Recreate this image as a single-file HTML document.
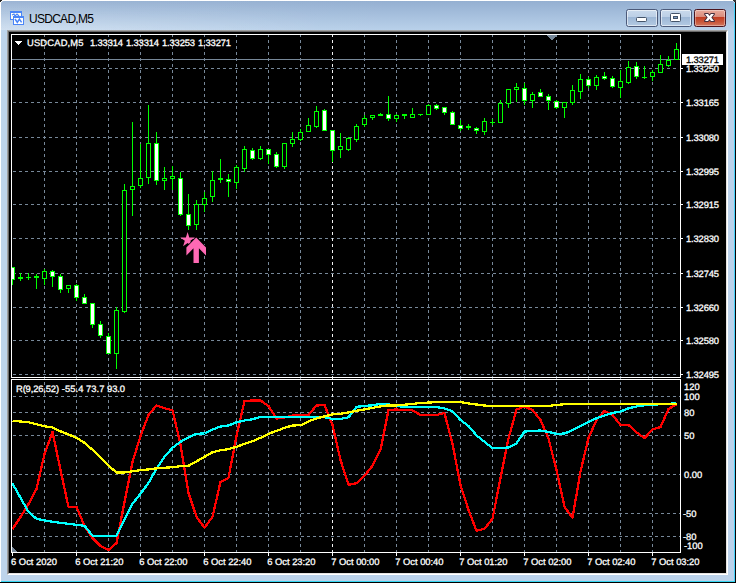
<!DOCTYPE html>
<html><head><meta charset="utf-8"><title>USDCAD,M5</title>
<style>
html,body{margin:0;padding:0;background:#fff;}
body{width:737px;height:583px;position:relative;overflow:hidden;font-family:"Liberation Sans",Arial,sans-serif;}
.win{position:absolute;left:1px;top:1px;width:734px;height:581px;box-sizing:border-box;
  background:linear-gradient(90deg,rgba(255,255,255,.07) 0,rgba(255,255,255,.04) 30%,rgba(255,255,255,0) 55%,rgba(255,255,255,0) 85%,rgba(255,255,255,.03) 100%),linear-gradient(180deg,#94afd1 0,#b9d1ea 29px,#b9d1ea 100%);
  border-radius:3px 3px 0 0;}
.glow{position:absolute;left:1px;top:1px;width:330px;height:29px;background:linear-gradient(180deg,rgba(255,255,255,0) 0,rgba(255,255,255,.1) 40%,rgba(255,255,255,.3) 100%);-webkit-mask-image:linear-gradient(90deg,#000 0,rgba(0,0,0,.6) 40%,transparent 100%);mask-image:linear-gradient(90deg,#000 0,rgba(0,0,0,.6) 40%,transparent 100%);}
.edge-r{position:absolute;left:734px;top:3px;width:1px;height:579px;background:#46d2fa;}
.edge-r2{position:absolute;left:735px;top:2px;width:1px;height:581px;background:#0a0505;}
.edge-b{position:absolute;left:1px;top:581px;width:734px;height:1px;background:#35d6f2;}
.edge-b2{position:absolute;left:0;top:582px;width:736px;height:1px;background:#000;}
.corner{position:absolute;left:0;top:0;width:2px;height:1px;background:#222;}
.corner1{position:absolute;left:0;top:1px;width:1px;height:1px;background:#222;}
.corner2{position:absolute;left:733px;top:0;width:3px;height:1px;background:#333;}
.corner3{position:absolute;left:734px;top:1px;width:2px;height:1px;background:#333;}
.title{position:absolute;left:29px;top:12px;font-size:12px;line-height:14px;color:#000;letter-spacing:-0.72px;white-space:nowrap;}
.sunk{position:absolute;left:7px;top:30px;width:721px;height:545px;box-sizing:border-box;
  border-style:solid;border-width:1px;border-color:#a0a0a0 #fff #fff #a0a0a0;}
.sunk2{position:absolute;left:8px;top:31px;width:719px;height:543px;box-sizing:border-box;background:#000;
  border-style:solid;border-width:1px;border-color:#696969 #e3e3e3 #e3e3e3 #696969;}
.btn{position:absolute;top:9px;width:32px;height:18px;box-sizing:border-box;border:1px solid #4c5a7a;border-radius:2.5px;
  background:linear-gradient(180deg,#c9d9ec 0,#bccfe6 42%,#9db7d6 46%,#b4cae3 100%);box-shadow:inset 0 0 0 1px rgba(255,255,255,.55);}
.btn.close{border-color:#4b141e;background:linear-gradient(180deg,#e9aa9b 0,#d98c7d 42%,#c23c22 46%,#c9573a 75%,#d47860 100%);box-shadow:inset 0 0 0 1px rgba(255,255,255,.35);}
.chart{position:absolute;left:0;top:0;}
.ico{position:absolute;left:0;top:0;}
</style></head><body>
<div class="win"></div><div class="glow"></div>
<div class="corner"></div><div class="corner1"></div><div class="corner2"></div><div class="corner3"></div>
<div class="edge-r"></div><div class="edge-r2"></div><div class="edge-b"></div><div class="edge-b2"></div>
<div class="title">USDCAD,M5</div>
<div class="btn" style="left:626px"></div>
<div class="btn" style="left:660px"></div>
<div class="btn close" style="left:694px"></div>
<svg class="ico" width="737" height="34" viewBox="0 0 737 34">
<!-- app icon -->
<g shape-rendering="crispEdges">
<rect x="10" y="11" width="12" height="9" fill="#4a86f7"/><rect x="11" y="13" width="10" height="6" fill="#fffef4"/>
<rect x="13" y="16" width="11" height="9" fill="#4a86f7"/><rect x="14" y="18" width="9" height="6" fill="#fff"/>
</g>
<polyline points="12,15 14,14 15,16 17,14 19,16" fill="none" stroke="#4a86f7" stroke-width="1.2"/>
<polyline points="15,19 17.3,22.3 19.4,19 21.6,22.3" fill="none" stroke="#4a86f7" stroke-width="1.5"/>
<!-- minimize glyph -->
<rect x="636.5" y="17.5" width="10" height="4" rx="1" fill="#fff" stroke="#44546a" stroke-width="1"/>
<!-- maximize glyph -->
<rect x="670.5" y="13.5" width="10" height="8" rx="1" fill="#fff" stroke="#44546a" stroke-width="1"/>
<rect x="673.5" y="16.5" width="4" height="2" fill="#7f9fc6" stroke="#44546a" stroke-width="1"/>
<!-- close glyph -->
<g stroke-linecap="butt">
<polygon points="705,14 708,14 709.5,15.9 711,14 714,14 711.3,17.5 714,21 711,21 709.5,19.1 708,21 705,21 707.7,17.5" fill="#fff" stroke="#47303f" stroke-width="2" stroke-linejoin="round" paint-order="stroke"/>
</g>
</svg>
<div class="sunk"></div><div class="sunk2"></div>
<svg class="chart" width="737" height="583" viewBox="0 0 737 583" shape-rendering="crispEdges">
<g stroke="#778899" stroke-width="1" stroke-dasharray="3 3" fill="none"><line x1="13" y1="68.5" x2="676" y2="68.5"/><line x1="13" y1="102.5" x2="676" y2="102.5"/><line x1="13" y1="137.5" x2="676" y2="137.5"/><line x1="13" y1="171.5" x2="676" y2="171.5"/><line x1="13" y1="204.5" x2="676" y2="204.5"/><line x1="13" y1="238.5" x2="676" y2="238.5"/><line x1="13" y1="273.5" x2="676" y2="273.5"/><line x1="13" y1="307.5" x2="676" y2="307.5"/><line x1="13" y1="340.5" x2="676" y2="340.5"/><line x1="13" y1="374.5" x2="676" y2="374.5"/><line x1="13" y1="396.5" x2="680" y2="396.5"/><line x1="13" y1="412.5" x2="680" y2="412.5"/><line x1="13" y1="435.5" x2="680" y2="435.5"/><line x1="13" y1="474.5" x2="680" y2="474.5"/><line x1="13" y1="513.5" x2="680" y2="513.5"/><line x1="13" y1="536.5" x2="680" y2="536.5"/><line x1="44.5" y1="34" x2="44.5" y2="552"/><line x1="76.5" y1="34" x2="76.5" y2="552"/><line x1="108.5" y1="34" x2="108.5" y2="552"/><line x1="140.5" y1="34" x2="140.5" y2="552"/><line x1="172.5" y1="34" x2="172.5" y2="552"/><line x1="204.5" y1="34" x2="204.5" y2="552"/><line x1="236.5" y1="34" x2="236.5" y2="552"/><line x1="268.5" y1="34" x2="268.5" y2="552"/><line x1="300.5" y1="34" x2="300.5" y2="552"/><line x1="364.5" y1="34" x2="364.5" y2="552"/><line x1="396.5" y1="34" x2="396.5" y2="552"/><line x1="428.5" y1="34" x2="428.5" y2="552"/><line x1="460.5" y1="34" x2="460.5" y2="552"/><line x1="492.5" y1="34" x2="492.5" y2="552"/><line x1="524.5" y1="34" x2="524.5" y2="552"/><line x1="556.5" y1="34" x2="556.5" y2="552"/><line x1="588.5" y1="34" x2="588.5" y2="552"/><line x1="620.5" y1="34" x2="620.5" y2="552"/><line x1="652.5" y1="34" x2="652.5" y2="552"/></g><g stroke="#f0f0f0" stroke-width="1" stroke-dasharray="3 3" fill="none"><line x1="332.5" y1="34" x2="332.5" y2="552"/></g>
<!-- bid line -->
<rect x="12" y="59" width="668" height="1" fill="#778899"/>
<!-- shift markers -->
<polygon points="546,35 557,35 551.5,40.5" fill="#778899"/>
<rect x="15" y="41" width="7" height="1" fill="#fff"/><rect x="16" y="42" width="5" height="1" fill="#fff"/><rect x="17" y="43" width="3" height="1" fill="#fff"/><rect x="18" y="44" width="1" height="1" fill="#fff"/>
<polygon points="12,547 12,552 17,552" fill="#778899"/>
<!-- frames -->
<g fill="#fff">
<rect x="11" y="34" width="670" height="1"/>
<rect x="11" y="377" width="670" height="1"/>
<rect x="11" y="379" width="670" height="1"/>
<rect x="11" y="552" width="670" height="1"/>
<rect x="11" y="34" width="1" height="344"/>
<rect x="11" y="379" width="1" height="174"/>
<rect x="680" y="34" width="1" height="344"/>
<rect x="680" y="379" width="1" height="174"/>
</g>
<rect x="12" y="553" width="1" height="3" fill="#fff"/><rect x="76" y="553" width="1" height="3" fill="#fff"/><rect x="140" y="553" width="1" height="3" fill="#fff"/><rect x="204" y="553" width="1" height="3" fill="#fff"/><rect x="268" y="553" width="1" height="3" fill="#fff"/><rect x="332" y="553" width="1" height="3" fill="#fff"/><rect x="396" y="553" width="1" height="3" fill="#fff"/><rect x="460" y="553" width="1" height="3" fill="#fff"/><rect x="524" y="553" width="1" height="3" fill="#fff"/><rect x="588" y="553" width="1" height="3" fill="#fff"/><rect x="652" y="553" width="1" height="3" fill="#fff"/><rect x="681" y="68" width="2" height="1" fill="#fff"/><rect x="681" y="102" width="2" height="1" fill="#fff"/><rect x="681" y="137" width="2" height="1" fill="#fff"/><rect x="681" y="171" width="2" height="1" fill="#fff"/><rect x="681" y="204" width="2" height="1" fill="#fff"/><rect x="681" y="238" width="2" height="1" fill="#fff"/><rect x="681" y="273" width="2" height="1" fill="#fff"/><rect x="681" y="307" width="2" height="1" fill="#fff"/><rect x="681" y="340" width="2" height="1" fill="#fff"/><rect x="681" y="374" width="2" height="1" fill="#fff"/>
<!-- candles -->
<clipPath id="cl"><rect x="12" y="35" width="668" height="342"/></clipPath>
<g clip-path="url(#cl)">
<rect x="12" y="267" width="1" height="18" fill="#00ff00"/>
<rect x="10" y="267" width="5" height="13" fill="#00ff00"/>
<rect x="11" y="268" width="3" height="11" fill="#fff"/>
<rect x="20" y="273" width="1" height="8" fill="#00ff00"/>
<rect x="18" y="277" width="5" height="2" fill="#00ff00"/>
<rect x="28" y="273" width="1" height="7" fill="#00ff00"/>
<rect x="26" y="277" width="5" height="1" fill="#00ff00"/>
<rect x="36" y="274" width="1" height="15" fill="#00ff00"/>
<rect x="34" y="276" width="5" height="2" fill="#00ff00"/>
<rect x="44" y="269" width="1" height="16" fill="#00ff00"/>
<rect x="42" y="271" width="5" height="8" fill="#00ff00"/>
<rect x="43" y="272" width="3" height="6" fill="#000"/>
<rect x="52" y="270" width="1" height="17" fill="#00ff00"/>
<rect x="50" y="271" width="5" height="6" fill="#00ff00"/>
<rect x="51" y="272" width="3" height="4" fill="#fff"/>
<rect x="60" y="274" width="1" height="19" fill="#00ff00"/>
<rect x="58" y="276" width="5" height="14" fill="#00ff00"/>
<rect x="59" y="277" width="3" height="12" fill="#fff"/>
<rect x="68" y="285" width="1" height="8" fill="#00ff00"/>
<rect x="66" y="285" width="5" height="4" fill="#00ff00"/>
<rect x="67" y="286" width="3" height="2" fill="#000"/>
<rect x="76" y="284" width="1" height="17" fill="#00ff00"/>
<rect x="74" y="285" width="5" height="13" fill="#00ff00"/>
<rect x="75" y="286" width="3" height="11" fill="#fff"/>
<rect x="84" y="294" width="1" height="10" fill="#00ff00"/>
<rect x="82" y="297" width="5" height="7" fill="#00ff00"/>
<rect x="83" y="298" width="3" height="5" fill="#fff"/>
<rect x="92" y="303" width="1" height="25" fill="#00ff00"/>
<rect x="90" y="303" width="5" height="22" fill="#00ff00"/>
<rect x="91" y="304" width="3" height="20" fill="#fff"/>
<rect x="100" y="321" width="1" height="17" fill="#00ff00"/>
<rect x="98" y="324" width="5" height="12" fill="#00ff00"/>
<rect x="99" y="325" width="3" height="10" fill="#fff"/>
<rect x="108" y="333" width="1" height="21" fill="#00ff00"/>
<rect x="106" y="336" width="5" height="18" fill="#00ff00"/>
<rect x="107" y="337" width="3" height="16" fill="#fff"/>
<rect x="116" y="307" width="1" height="62" fill="#00ff00"/>
<rect x="114" y="310" width="5" height="44" fill="#00ff00"/>
<rect x="115" y="311" width="3" height="42" fill="#000"/>
<rect x="124" y="184" width="1" height="129" fill="#00ff00"/>
<rect x="122" y="190" width="5" height="122" fill="#00ff00"/>
<rect x="123" y="191" width="3" height="120" fill="#000"/>
<rect x="132" y="122" width="1" height="94" fill="#00ff00"/>
<rect x="130" y="186" width="5" height="4" fill="#00ff00"/>
<rect x="131" y="187" width="3" height="2" fill="#000"/>
<rect x="140" y="144" width="1" height="44" fill="#00ff00"/>
<rect x="138" y="178" width="5" height="8" fill="#00ff00"/>
<rect x="139" y="179" width="3" height="6" fill="#000"/>
<rect x="148" y="105" width="1" height="79" fill="#00ff00"/>
<rect x="146" y="143" width="5" height="35" fill="#00ff00"/>
<rect x="147" y="144" width="3" height="33" fill="#000"/>
<rect x="156" y="132" width="1" height="53" fill="#00ff00"/>
<rect x="154" y="143" width="5" height="38" fill="#00ff00"/>
<rect x="155" y="144" width="3" height="36" fill="#fff"/>
<rect x="164" y="167" width="1" height="23" fill="#00ff00"/>
<rect x="162" y="178" width="5" height="3" fill="#00ff00"/>
<rect x="163" y="179" width="3" height="1" fill="#000"/>
<rect x="172" y="166" width="1" height="24" fill="#00ff00"/>
<rect x="170" y="176" width="5" height="3" fill="#00ff00"/>
<rect x="171" y="177" width="3" height="1" fill="#000"/>
<rect x="180" y="172" width="1" height="44" fill="#00ff00"/>
<rect x="178" y="178" width="5" height="37" fill="#00ff00"/>
<rect x="179" y="179" width="3" height="35" fill="#fff"/>
<rect x="188" y="194" width="1" height="36" fill="#00ff00"/>
<rect x="186" y="214" width="5" height="12" fill="#00ff00"/>
<rect x="187" y="215" width="3" height="10" fill="#fff"/>
<rect x="196" y="200" width="1" height="30" fill="#00ff00"/>
<rect x="194" y="204" width="5" height="21" fill="#00ff00"/>
<rect x="195" y="205" width="3" height="19" fill="#000"/>
<rect x="204" y="192" width="1" height="20" fill="#00ff00"/>
<rect x="202" y="198" width="5" height="7" fill="#00ff00"/>
<rect x="203" y="199" width="3" height="5" fill="#000"/>
<rect x="212" y="171" width="1" height="31" fill="#00ff00"/>
<rect x="210" y="180" width="5" height="17" fill="#00ff00"/>
<rect x="211" y="181" width="3" height="15" fill="#000"/>
<rect x="220" y="159" width="1" height="24" fill="#00ff00"/>
<rect x="218" y="178" width="5" height="2" fill="#00ff00"/>
<rect x="228" y="174" width="1" height="23" fill="#00ff00"/>
<rect x="226" y="179" width="5" height="3" fill="#00ff00"/>
<rect x="227" y="180" width="3" height="1" fill="#fff"/>
<rect x="236" y="165" width="1" height="24" fill="#00ff00"/>
<rect x="234" y="167" width="5" height="16" fill="#00ff00"/>
<rect x="235" y="168" width="3" height="14" fill="#000"/>
<rect x="244" y="146" width="1" height="26" fill="#00ff00"/>
<rect x="242" y="149" width="5" height="20" fill="#00ff00"/>
<rect x="243" y="150" width="3" height="18" fill="#000"/>
<rect x="252" y="148" width="1" height="12" fill="#00ff00"/>
<rect x="250" y="150" width="5" height="9" fill="#00ff00"/>
<rect x="251" y="151" width="3" height="7" fill="#fff"/>
<rect x="260" y="146" width="1" height="14" fill="#00ff00"/>
<rect x="258" y="149" width="5" height="10" fill="#00ff00"/>
<rect x="259" y="150" width="3" height="8" fill="#000"/>
<rect x="268" y="149" width="1" height="15" fill="#00ff00"/>
<rect x="266" y="149" width="5" height="6" fill="#00ff00"/>
<rect x="267" y="150" width="3" height="4" fill="#fff"/>
<rect x="276" y="152" width="1" height="16" fill="#00ff00"/>
<rect x="274" y="154" width="5" height="13" fill="#00ff00"/>
<rect x="275" y="155" width="3" height="11" fill="#fff"/>
<rect x="284" y="143" width="1" height="26" fill="#00ff00"/>
<rect x="282" y="143" width="5" height="24" fill="#00ff00"/>
<rect x="283" y="144" width="3" height="22" fill="#000"/>
<rect x="292" y="132" width="1" height="15" fill="#00ff00"/>
<rect x="290" y="139" width="5" height="5" fill="#00ff00"/>
<rect x="291" y="140" width="3" height="3" fill="#000"/>
<rect x="300" y="129" width="1" height="12" fill="#00ff00"/>
<rect x="298" y="132" width="5" height="8" fill="#00ff00"/>
<rect x="299" y="133" width="3" height="6" fill="#000"/>
<rect x="308" y="118" width="1" height="14" fill="#00ff00"/>
<rect x="306" y="125" width="5" height="7" fill="#00ff00"/>
<rect x="307" y="126" width="3" height="5" fill="#000"/>
<rect x="316" y="106" width="1" height="22" fill="#00ff00"/>
<rect x="314" y="111" width="5" height="16" fill="#00ff00"/>
<rect x="315" y="112" width="3" height="14" fill="#000"/>
<rect x="324" y="109" width="1" height="22" fill="#00ff00"/>
<rect x="322" y="110" width="5" height="21" fill="#00ff00"/>
<rect x="323" y="111" width="3" height="19" fill="#fff"/>
<rect x="332" y="130" width="1" height="32" fill="#00ff00"/>
<rect x="330" y="130" width="5" height="21" fill="#00ff00"/>
<rect x="331" y="131" width="3" height="19" fill="#fff"/>
<rect x="340" y="133" width="1" height="25" fill="#00ff00"/>
<rect x="338" y="146" width="5" height="4" fill="#00ff00"/>
<rect x="339" y="147" width="3" height="2" fill="#000"/>
<rect x="348" y="137" width="1" height="14" fill="#00ff00"/>
<rect x="346" y="138" width="5" height="12" fill="#00ff00"/>
<rect x="347" y="139" width="3" height="10" fill="#000"/>
<rect x="356" y="124" width="1" height="18" fill="#00ff00"/>
<rect x="354" y="126" width="5" height="14" fill="#00ff00"/>
<rect x="355" y="127" width="3" height="12" fill="#000"/>
<rect x="364" y="115" width="1" height="12" fill="#00ff00"/>
<rect x="362" y="118" width="5" height="7" fill="#00ff00"/>
<rect x="363" y="119" width="3" height="5" fill="#000"/>
<rect x="372" y="115" width="1" height="5" fill="#00ff00"/>
<rect x="370" y="115" width="5" height="3" fill="#00ff00"/>
<rect x="371" y="116" width="3" height="1" fill="#000"/>
<rect x="380" y="113" width="1" height="3" fill="#00ff00"/>
<rect x="378" y="114" width="5" height="2" fill="#00ff00"/>
<rect x="388" y="96" width="1" height="25" fill="#00ff00"/>
<rect x="386" y="114" width="5" height="5" fill="#00ff00"/>
<rect x="387" y="115" width="3" height="3" fill="#fff"/>
<rect x="396" y="114" width="1" height="8" fill="#00ff00"/>
<rect x="394" y="115" width="5" height="4" fill="#00ff00"/>
<rect x="395" y="116" width="3" height="2" fill="#000"/>
<rect x="404" y="114" width="1" height="5" fill="#00ff00"/>
<rect x="402" y="114" width="5" height="2" fill="#00ff00"/>
<rect x="412" y="108" width="1" height="10" fill="#00ff00"/>
<rect x="410" y="114" width="5" height="4" fill="#00ff00"/>
<rect x="411" y="115" width="3" height="2" fill="#000"/>
<rect x="420" y="114" width="1" height="2" fill="#00ff00"/>
<rect x="418" y="114" width="5" height="1" fill="#00ff00"/>
<rect x="428" y="104" width="1" height="11" fill="#00ff00"/>
<rect x="426" y="105" width="5" height="10" fill="#00ff00"/>
<rect x="427" y="106" width="3" height="8" fill="#000"/>
<rect x="436" y="104" width="1" height="6" fill="#00ff00"/>
<rect x="434" y="105" width="5" height="4" fill="#00ff00"/>
<rect x="435" y="106" width="3" height="2" fill="#fff"/>
<rect x="444" y="107" width="1" height="8" fill="#00ff00"/>
<rect x="442" y="107" width="5" height="6" fill="#00ff00"/>
<rect x="443" y="108" width="3" height="4" fill="#fff"/>
<rect x="452" y="111" width="1" height="14" fill="#00ff00"/>
<rect x="450" y="112" width="5" height="13" fill="#00ff00"/>
<rect x="451" y="113" width="3" height="11" fill="#fff"/>
<rect x="460" y="120" width="1" height="11" fill="#00ff00"/>
<rect x="458" y="125" width="5" height="4" fill="#00ff00"/>
<rect x="459" y="126" width="3" height="2" fill="#fff"/>
<rect x="468" y="124" width="1" height="6" fill="#00ff00"/>
<rect x="466" y="126" width="5" height="2" fill="#00ff00"/>
<rect x="476" y="127" width="1" height="7" fill="#00ff00"/>
<rect x="474" y="128" width="5" height="3" fill="#00ff00"/>
<rect x="475" y="129" width="3" height="1" fill="#fff"/>
<rect x="484" y="118" width="1" height="17" fill="#00ff00"/>
<rect x="482" y="121" width="5" height="11" fill="#00ff00"/>
<rect x="483" y="122" width="3" height="9" fill="#000"/>
<rect x="492" y="119" width="1" height="6" fill="#00ff00"/>
<rect x="490" y="122" width="5" height="1" fill="#00ff00"/>
<rect x="500" y="100" width="1" height="23" fill="#00ff00"/>
<rect x="498" y="103" width="5" height="20" fill="#00ff00"/>
<rect x="499" y="104" width="3" height="18" fill="#000"/>
<rect x="508" y="89" width="1" height="19" fill="#00ff00"/>
<rect x="506" y="89" width="5" height="15" fill="#00ff00"/>
<rect x="507" y="90" width="3" height="13" fill="#000"/>
<rect x="516" y="83" width="1" height="19" fill="#00ff00"/>
<rect x="514" y="87" width="5" height="3" fill="#00ff00"/>
<rect x="515" y="88" width="3" height="1" fill="#000"/>
<rect x="524" y="83" width="1" height="22" fill="#00ff00"/>
<rect x="522" y="88" width="5" height="13" fill="#00ff00"/>
<rect x="523" y="89" width="3" height="11" fill="#fff"/>
<rect x="532" y="92" width="1" height="16" fill="#00ff00"/>
<rect x="530" y="94" width="5" height="7" fill="#00ff00"/>
<rect x="531" y="95" width="3" height="5" fill="#000"/>
<rect x="540" y="89" width="1" height="8" fill="#00ff00"/>
<rect x="538" y="92" width="5" height="5" fill="#00ff00"/>
<rect x="539" y="93" width="3" height="3" fill="#fff"/>
<rect x="548" y="94" width="1" height="16" fill="#00ff00"/>
<rect x="546" y="96" width="5" height="5" fill="#00ff00"/>
<rect x="547" y="97" width="3" height="3" fill="#fff"/>
<rect x="556" y="100" width="1" height="9" fill="#00ff00"/>
<rect x="554" y="101" width="5" height="7" fill="#00ff00"/>
<rect x="555" y="102" width="3" height="5" fill="#fff"/>
<rect x="564" y="102" width="1" height="16" fill="#00ff00"/>
<rect x="562" y="102" width="5" height="6" fill="#00ff00"/>
<rect x="563" y="103" width="3" height="4" fill="#000"/>
<rect x="572" y="85" width="1" height="20" fill="#00ff00"/>
<rect x="570" y="90" width="5" height="13" fill="#00ff00"/>
<rect x="571" y="91" width="3" height="11" fill="#000"/>
<rect x="580" y="74" width="1" height="25" fill="#00ff00"/>
<rect x="578" y="79" width="5" height="13" fill="#00ff00"/>
<rect x="579" y="80" width="3" height="11" fill="#000"/>
<rect x="588" y="77" width="1" height="11" fill="#00ff00"/>
<rect x="586" y="79" width="5" height="7" fill="#00ff00"/>
<rect x="587" y="80" width="3" height="5" fill="#fff"/>
<rect x="596" y="75" width="1" height="15" fill="#00ff00"/>
<rect x="594" y="77" width="5" height="9" fill="#00ff00"/>
<rect x="595" y="78" width="3" height="7" fill="#000"/>
<rect x="604" y="72" width="1" height="8" fill="#00ff00"/>
<rect x="602" y="76" width="5" height="3" fill="#00ff00"/>
<rect x="603" y="77" width="3" height="1" fill="#fff"/>
<rect x="612" y="76" width="1" height="12" fill="#00ff00"/>
<rect x="610" y="78" width="5" height="9" fill="#00ff00"/>
<rect x="611" y="79" width="3" height="7" fill="#fff"/>
<rect x="620" y="70" width="1" height="28" fill="#00ff00"/>
<rect x="618" y="81" width="5" height="7" fill="#00ff00"/>
<rect x="619" y="82" width="3" height="5" fill="#000"/>
<rect x="628" y="61" width="1" height="23" fill="#00ff00"/>
<rect x="626" y="67" width="5" height="16" fill="#00ff00"/>
<rect x="627" y="68" width="3" height="14" fill="#000"/>
<rect x="636" y="62" width="1" height="17" fill="#00ff00"/>
<rect x="634" y="66" width="5" height="11" fill="#00ff00"/>
<rect x="635" y="67" width="3" height="9" fill="#fff"/>
<rect x="644" y="66" width="1" height="13" fill="#00ff00"/>
<rect x="642" y="77" width="5" height="1" fill="#00ff00"/>
<rect x="652" y="70" width="1" height="11" fill="#00ff00"/>
<rect x="650" y="72" width="5" height="5" fill="#00ff00"/>
<rect x="651" y="73" width="3" height="3" fill="#000"/>
<rect x="660" y="55" width="1" height="18" fill="#00ff00"/>
<rect x="658" y="64" width="5" height="9" fill="#00ff00"/>
<rect x="659" y="65" width="3" height="7" fill="#000"/>
<rect x="668" y="56" width="1" height="11" fill="#00ff00"/>
<rect x="666" y="60" width="5" height="6" fill="#00ff00"/>
<rect x="667" y="61" width="3" height="4" fill="#000"/>
<rect x="676" y="43" width="1" height="17" fill="#00ff00"/>
<rect x="674" y="49" width="5" height="11" fill="#00ff00"/>
<rect x="675" y="50" width="3" height="9" fill="#000"/>
</g>
<!-- arrow + star -->
<g shape-rendering="geometricPrecision">
<polygon points="187.6,232 189.3,237.4 195,237.4 190.4,240.8 192.1,246.2 187.6,242.9 183.1,246.2 184.8,240.8 180.2,237.4 185.9,237.4" fill="#ff69b4"/>
<polygon points="196.2,237.6 206,247.4 206,255.4 198.9,248.3 198.9,263 193.5,263 193.5,248.3 186.4,255.4 186.4,247.4" fill="#ff69b4" stroke="#000" stroke-width="1.4" paint-order="stroke"/>
</g>
<!-- indicator -->
<polyline points="12.5,529.0 20.5,517.0 28.5,504.0 36.5,489.0 44.5,454.0 52.5,432.0 60.5,470.0 68.5,507.0 76.5,507.0 84.5,526.0 92.5,538.0 100.5,546.0 108.5,550.0 116.5,543.0 124.5,502.0 132.5,462.0 140.5,436.0 148.5,415.0 156.5,405.5 164.5,408.3 172.5,410.3 180.5,444.5 188.5,493.0 196.5,516.8 204.5,527.8 212.5,516.8 220.5,482.0 228.5,477.8 236.5,436.0 244.5,401.0 252.5,400.5 260.5,400.5 268.5,406.0 276.5,418.5 284.5,417.5 292.5,415.5 300.5,415.5 308.5,415.0 316.5,405.5 324.5,405.0 332.5,425.0 340.5,460.0 348.5,484.7 356.5,483.3 364.5,475.7 372.5,465.8 380.5,449.8 388.5,410.0 396.5,409.5 404.5,410.3 412.5,410.3 420.5,415.0 428.5,415.3 436.5,415.0 444.5,413.0 452.5,444.0 460.5,485.0 468.5,510.0 476.5,530.7 484.5,528.8 492.5,518.8 500.5,478.0 508.5,438.5 516.5,409.5 524.5,406.5 532.5,410.0 540.5,420.0 548.5,438.5 556.5,470.0 564.5,506.8 572.5,517.8 580.5,471.5 588.5,438.0 596.5,420.0 604.5,411.0 612.5,415.0 620.5,425.0 628.5,425.0 636.5,432.3 644.5,438.2 652.5,429.5 660.5,427.0 668.5,409.0 676.5,404.3" fill="none" stroke="#ff0000" stroke-width="2.3" stroke-linejoin="round"/>
<polyline points="12.5,483.5 20.5,497.8 28.5,511.8 36.5,518.8 44.5,520.4 52.5,521.8 60.5,522.8 68.5,523.8 76.5,524.8 84.5,525.8 92.5,535.7 100.5,535.7 108.5,535.7 116.5,535.7 124.5,519.8 132.5,503.8 140.5,493.8 148.5,482.9 156.5,468.8 164.5,456.8 172.5,447.8 180.5,441.8 188.5,437.4 196.5,433.8 204.5,433.5 212.5,429.5 220.5,426.5 228.5,425.5 236.5,422.3 244.5,420.5 252.5,419.3 260.5,416.9 268.5,416.9 276.5,416.9 284.5,416.9 292.5,416.9 300.5,416.9 308.5,416.9 316.5,416.9 324.5,417.3 332.5,418.9 340.5,418.9 348.5,417.3 356.5,406.9 364.5,405.9 372.5,405.3 380.5,403.9 388.5,404.3 396.5,405.9 404.5,407.0 412.5,407.0 420.5,407.0 428.5,407.0 436.5,407.1 444.5,408.4 452.5,411.2 460.5,420.0 468.5,426.0 476.5,435.4 484.5,441.8 492.5,448.2 500.5,448.2 508.5,447.4 516.5,443.4 524.5,431.5 532.5,431.0 540.5,430.5 548.5,432.0 556.5,433.8 564.5,433.6 572.5,430.0 580.5,426.0 588.5,422.0 596.5,418.3 604.5,415.5 612.5,413.0 620.5,411.5 628.5,408.3 636.5,406.5 644.5,405.3 652.5,404.5 660.5,404.3 668.5,404.0 676.5,403.0" fill="none" stroke="#00ffff" stroke-width="2.3" stroke-linejoin="round"/>
<polyline points="12.5,420.9 20.5,421.5 28.5,422.3 36.5,424.3 44.5,426.3 52.5,427.3 60.5,431.3 68.5,434.5 76.5,437.8 84.5,442.8 92.5,449.8 100.5,457.8 108.5,465.8 116.5,472.5 124.5,472.5 132.5,471.3 140.5,470.2 148.5,469.4 156.5,468.4 164.5,467.8 172.5,467.2 180.5,466.2 188.5,465.8 196.5,461.4 204.5,456.8 212.5,452.2 220.5,450.2 228.5,449.2 236.5,446.8 244.5,443.8 252.5,441.2 260.5,437.8 268.5,433.8 276.5,430.9 284.5,427.9 292.5,425.4 300.5,425.3 308.5,421.4 316.5,418.4 324.5,416.4 332.5,414.4 340.5,413.7 348.5,412.4 356.5,410.7 364.5,409.4 372.5,407.9 380.5,406.4 388.5,405.4 396.5,405.4 404.5,404.7 412.5,403.9 420.5,403.0 428.5,402.6 436.5,402.0 444.5,402.0 452.5,402.0 460.5,402.1 468.5,403.5 476.5,404.5 484.5,405.6 492.5,406.0 500.5,406.0 508.5,406.0 516.5,406.0 524.5,406.0 532.5,406.0 540.5,406.0 548.5,405.9 556.5,405.0 564.5,404.2 572.5,404.0 580.5,404.0 588.5,404.0 596.5,404.0 604.5,404.0 612.5,404.0 620.5,404.0 628.5,404.0 636.5,404.0 644.5,404.0 652.5,404.0 660.5,404.0 668.5,404.0 676.5,404.0" fill="none" stroke="#ffff00" stroke-width="2.3" stroke-linejoin="round"/>
<!-- price box -->
<rect x="682" y="54" width="41" height="11" fill="#fff"/>
<g font-family="Liberation Sans, Arial, sans-serif" font-size="9.4px" shape-rendering="auto" text-rendering="geometricPrecision" stroke="#fff" stroke-width="0.3">
<text x="27" y="46" fill="#fff" textLength="56.5" lengthAdjust="spacing">USDCAD,M5</text>
<text x="90" y="46" fill="#fff" textLength="33" lengthAdjust="spacing">1.33314</text>
<text x="126" y="46" fill="#fff" textLength="33" lengthAdjust="spacing">1.33314</text>
<text x="162" y="46" fill="#fff" textLength="33" lengthAdjust="spacing">1.33253</text>
<text x="198" y="46" fill="#fff" textLength="33" lengthAdjust="spacing">1.33271</text>
<text x="16" y="392" fill="#fff" textLength="43" lengthAdjust="spacing">R(9,26,52)</text>
<text x="61.8" y="392" fill="#fff" textLength="21.6" lengthAdjust="spacing">-55.4</text>
<text x="86.1" y="392" fill="#fff" textLength="18.3" lengthAdjust="spacing">73.7</text>
<text x="107" y="392" fill="#fff" textLength="18" lengthAdjust="spacing">93.0</text>
<text x="686" y="72" fill="#fff" textLength="33" lengthAdjust="spacing">1.33250</text>
<text x="686" y="106" fill="#fff" textLength="33" lengthAdjust="spacing">1.33165</text>
<text x="686" y="141" fill="#fff" textLength="33" lengthAdjust="spacing">1.33080</text>
<text x="686" y="175" fill="#fff" textLength="33" lengthAdjust="spacing">1.32995</text>
<text x="686" y="208" fill="#fff" textLength="33" lengthAdjust="spacing">1.32915</text>
<text x="686" y="242" fill="#fff" textLength="33" lengthAdjust="spacing">1.32830</text>
<text x="686" y="277" fill="#fff" textLength="33" lengthAdjust="spacing">1.32745</text>
<text x="686" y="311" fill="#fff" textLength="33" lengthAdjust="spacing">1.32660</text>
<text x="686" y="344" fill="#fff" textLength="33" lengthAdjust="spacing">1.32580</text>
<text x="686" y="378" fill="#fff" textLength="33" lengthAdjust="spacing">1.32495</text>
<text x="684" y="390" fill="#fff">120</text>
<text x="684" y="400" fill="#fff">100</text>
<text x="684" y="416" fill="#fff">80</text>
<text x="684" y="439" fill="#fff">50</text>
<text x="684" y="478" fill="#fff">0.00</text>
<text x="683" y="517" fill="#fff">-50</text>
<text x="683" y="540" fill="#fff">-80</text>
<text x="684" y="549" fill="#fff">-100</text>
<text x="11" y="565" fill="#fff" textLength="46" lengthAdjust="spacing">6 Oct 2020</text>
<text x="75.3" y="565" fill="#fff" textLength="48.2" lengthAdjust="spacing">6 Oct 21:20</text>
<text x="139.3" y="565" fill="#fff" textLength="48.2" lengthAdjust="spacing">6 Oct 22:00</text>
<text x="203.3" y="565" fill="#fff" textLength="48.2" lengthAdjust="spacing">6 Oct 22:40</text>
<text x="267.3" y="565" fill="#fff" textLength="48.2" lengthAdjust="spacing">6 Oct 23:20</text>
<text x="331.3" y="565" fill="#fff" textLength="48.2" lengthAdjust="spacing">7 Oct 00:00</text>
<text x="395.3" y="565" fill="#fff" textLength="48.2" lengthAdjust="spacing">7 Oct 00:40</text>
<text x="459.3" y="565" fill="#fff" textLength="48.2" lengthAdjust="spacing">7 Oct 01:20</text>
<text x="523.3" y="565" fill="#fff" textLength="48.2" lengthAdjust="spacing">7 Oct 02:00</text>
<text x="587.3" y="565" fill="#fff" textLength="48.2" lengthAdjust="spacing">7 Oct 02:40</text>
<text x="651.3" y="565" fill="#fff" textLength="48.2" lengthAdjust="spacing">7 Oct 03:20</text>
<text x="686" y="63" fill="#000" textLength="33" lengthAdjust="spacing" stroke="#000">1.33271</text>
</g>
</svg>
</body></html>
